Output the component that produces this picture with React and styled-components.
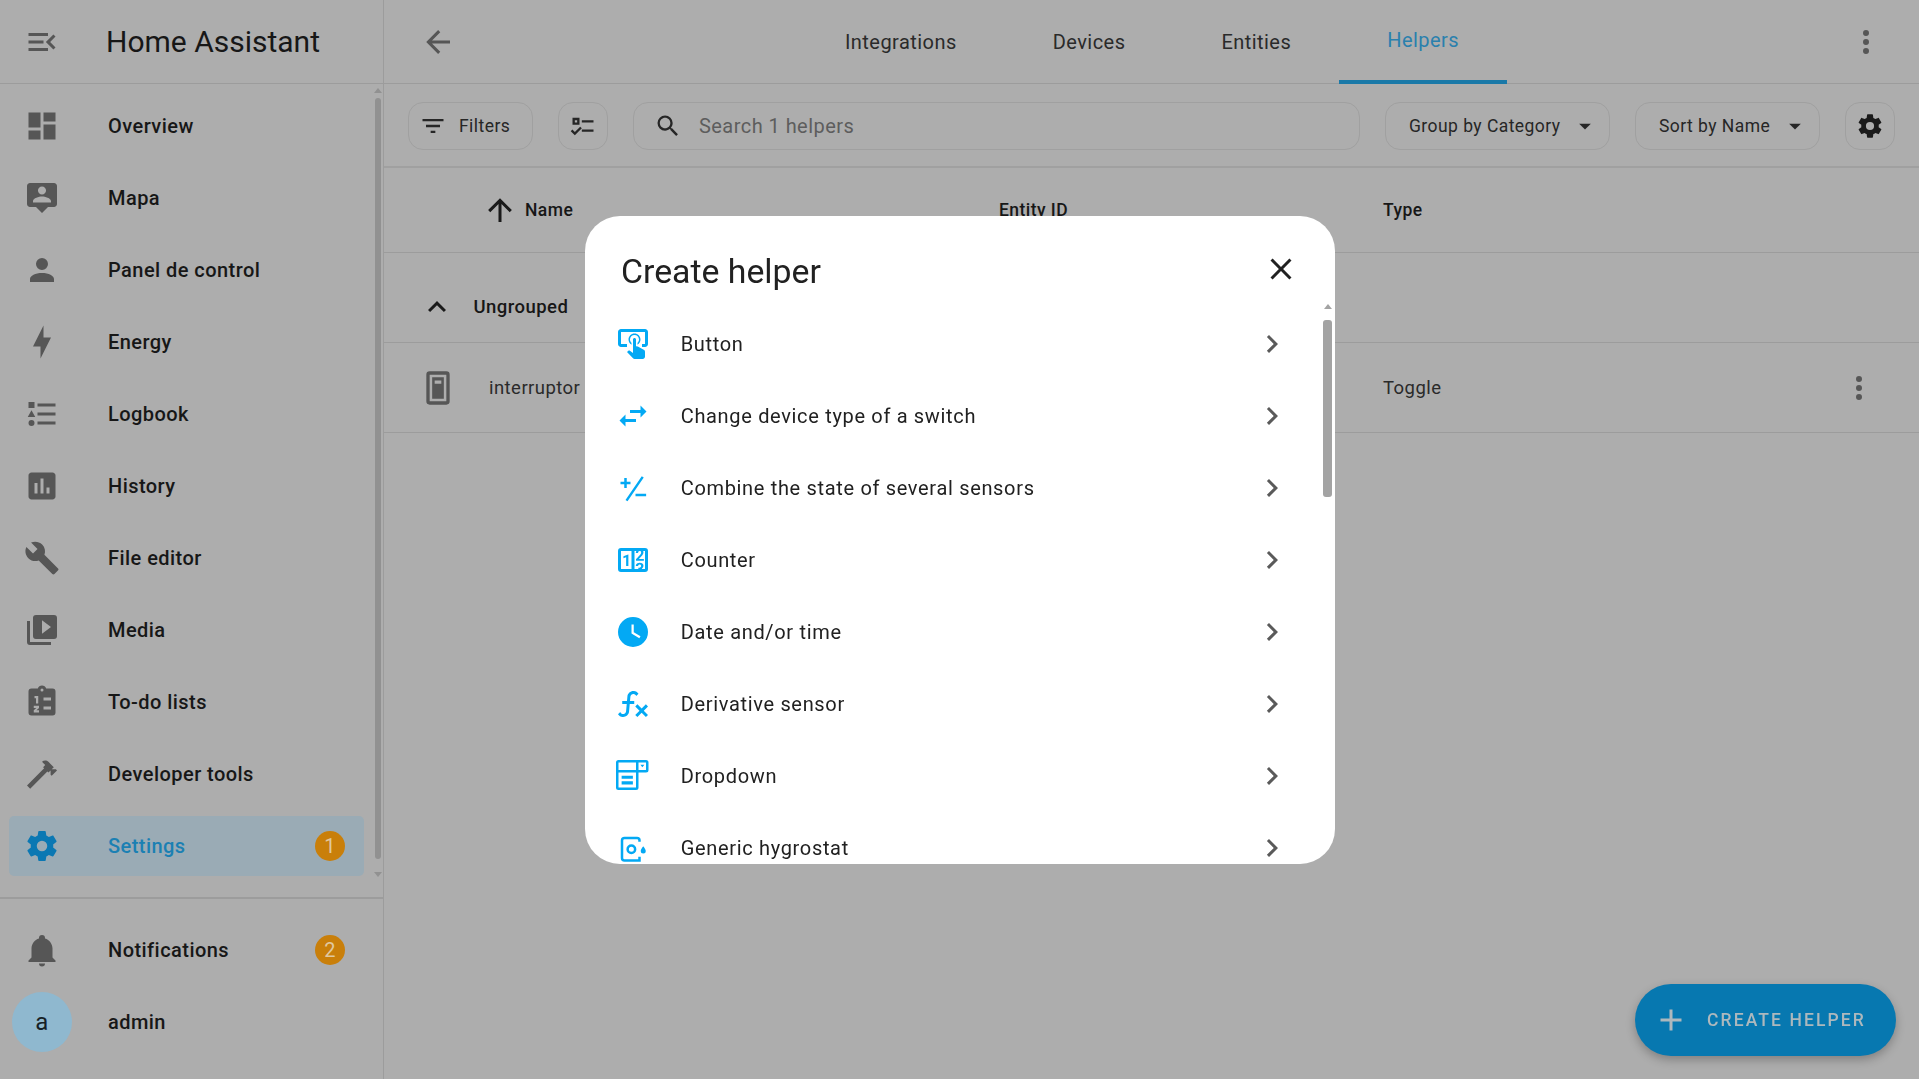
import React from 'react'
import styled, { createGlobalStyle } from 'styled-components'

const GlobalStyle = createGlobalStyle`
    html, body {
        margin: 0;
        height: 100%;
        overflow: hidden;
        background: #adadad;
        font-family: Roboto, "Liberation Sans", sans-serif;
    }
    * {
        box-sizing: border-box;
    }
`

const mdi = {
    menuOpen: 'M21,15.61L19.59,17L14.58,12L19.59,7L21,8.39L17.44,12L21,15.61M3,6H16V8H3V6M3,13V11H13V13H3M3,18V16H16V18H3Z',
    dashboard: 'M13,3V9H21V3M13,21H21V11H13M3,21H11V15H3M3,13H11V3H3V13Z',
    tooltipAccount: 'M20 2H4C2.9 2 2 2.9 2 4V16C2 17.1 2.9 18 4 18H8L12 22L16 18H20C21.1 18 22 17.1 22 16V4C22 2.9 21.1 2 20 2M12 4.3C13.5 4.3 14.7 5.5 14.7 7S13.5 9.7 12 9.7 9.3 8.5 9.3 7 10.5 4.3 12 4.3M18 15H6V14.1C6 12.1 10 11 12 11S18 12.1 18 14.1V15Z',
    account: 'M12,4A4,4 0 0,1 16,8A4,4 0 0,1 12,12A4,4 0 0,1 8,8A4,4 0 0,1 12,4M12,14C16.42,14 20,15.79 20,18V20H4V18C4,15.79 7.58,14 12,14Z',
    bolt: 'M11 15H6L13 1V9H18L11 23V15Z',
    listType: 'M5,9.5L7.5,14H2.5L5,9.5M3,4H7V8H3V4M5,20A2,2 0 0,0 7,18A2,2 0 0,0 5,16A2,2 0 0,0 3,18A2,2 0 0,0 5,20M9,5V7H21V5H9M9,19H21V17H9V19M9,13H21V11H9V13Z',
    chartBox: 'M19 3H5C3.9 3 3 3.9 3 5V19C3 20.1 3.9 21 5 21H19C20.1 21 21 20.1 21 19V5C21 3.9 20.1 3 19 3M9 17H7V10H9V17M13 17H11V7H13V17M17 17H15V13H17V17Z',
    wrench: 'M22.7,19L13.6,9.9C14.5,7.6 14,4.9 12.1,3C10.1,1 7.1,0.6 4.7,1.7L9,6L6,9L1.6,4.7C0.4,7.1 0.9,10.1 2.9,12.1C4.8,14 7.5,14.5 9.8,13.6L18.9,22.7C19.3,23.1 19.9,23.1 20.3,22.7L22.6,20.4C23.1,20 23.1,19.3 22.7,19Z',
    playBox: 'M4,6H2V20A2,2 0 0,0 4,22H18V20H4V6M20,2H8A2,2 0 0,0 6,4V16A2,2 0 0,0 8,18H20A2,2 0 0,0 22,16V4A2,2 0 0,0 20,2M12,14.5V5.5L18,10L12,14.5Z',
    clipboard: 'M19,3H14.82C14.4,1.84 13.3,1 12,1C10.7,1 9.6,1.84 9.18,3H5A2,2 0 0,0 3,5V19A2,2 0 0,0 5,21H19A2,2 0 0,0 21,19V5A2,2 0 0,0 19,3M12,3A1,1 0 0,1 13,4A1,1 0 0,1 12,5A1,1 0 0,1 11,4A1,1 0 0,1 12,3M13,9H18V11H13V9M13,15H18V17H13V15M7,8H9.5V13H8V9.5H7V8M6.5,14.5H10V16L8.3,17.5H10V19H6.5V17.5L8.2,16H6.5V14.5Z',
    hammer: 'M2 19.63L13.43 8.2L12.72 7.5L14.14 6.07L12 3.89C13.2 2.7 15.09 2.7 16.27 3.89L19.87 7.5L18.45 8.91H21.29L22 9.62L18.45 13.21L17.74 12.5V9.62L16.27 11.04L15.56 10.33L4.13 21.76L2 19.63Z',
    cog: 'M12,15.5A3.5,3.5 0 0,1 8.5,12A3.5,3.5 0 0,1 12,8.5A3.5,3.5 0 0,1 15.5,12A3.5,3.5 0 0,1 12,15.5M19.43,12.97C19.47,12.65 19.5,12.33 19.5,12C19.5,11.67 19.47,11.34 19.43,11L21.54,9.37C21.73,9.22 21.78,8.95 21.66,8.73L19.66,5.27C19.54,5.05 19.27,4.96 19.05,5.05L16.56,6.05C16.04,5.66 15.5,5.32 14.87,5.07L14.5,2.42C14.46,2.18 14.25,2 14,2H10C9.75,2 9.54,2.18 9.5,2.42L9.13,5.07C8.5,5.32 7.96,5.66 7.44,6.05L4.95,5.05C4.73,4.96 4.46,5.05 4.34,5.27L2.34,8.73C2.21,8.95 2.27,9.22 2.46,9.37L4.57,11C4.53,11.34 4.5,11.67 4.5,12C4.5,12.33 4.53,12.65 4.57,12.97L2.46,14.63C2.27,14.78 2.21,15.05 2.34,15.27L4.34,18.73C4.46,18.95 4.73,19.03 4.95,18.95L7.44,17.94C7.96,18.34 8.5,18.68 9.13,18.93L9.5,21.58C9.54,21.82 9.75,22 10,22H14C14.25,22 14.46,21.82 14.5,21.58L14.87,18.93C15.5,18.67 16.04,18.34 16.56,17.94L19.05,18.95C19.27,19.03 19.54,18.95 19.66,18.73L21.66,15.27C21.78,15.05 21.73,14.78 21.54,14.63L19.43,12.97Z',
    bell: 'M21,19V20H3V19L5,17V11C5,7.9 7.03,5.17 10,4.29C10,4.19 10,4.1 10,4A2,2 0 0,1 12,2A2,2 0 0,1 14,4C14,4.1 14,4.19 14,4.29C16.97,5.17 19,7.9 19,11V17L21,19M14,21A2,2 0 0,1 12,23A2,2 0 0,1 10,21',
    arrowLeft: 'M20,11V13H8L13.5,18.5L12.08,19.92L4.16,12L12.08,4.08L13.5,5.5L8,11H20Z',
    dots: 'M12,16A2,2 0 0,1 14,18A2,2 0 0,1 12,20A2,2 0 0,1 10,18A2,2 0 0,1 12,16M12,10A2,2 0 0,1 14,12A2,2 0 0,1 12,14A2,2 0 0,1 10,12A2,2 0 0,1 12,10M12,4A2,2 0 0,1 14,6A2,2 0 0,1 12,8A2,2 0 0,1 10,6A2,2 0 0,1 12,4Z',
    filter: 'M6,13H18V11H6M3,6V8H21V6M10,18H14V16H10V18Z',
    listChecks: 'M3,5H9V11H3V5M5,7V9H7V7H5M11,7H21V9H11V7M11,15H21V17H11V15M5,20L1.5,16.5L2.91,15.09L5,17.17L9.59,12.59L11,14L5,20Z',
    magnify: 'M9.5,3A6.5,6.5 0 0,1 16,9.5C16,11.11 15.41,12.59 14.44,13.73L14.71,14H15.5L20.5,19L19,20.5L14,15.5V14.71L13.73,14.44C12.59,15.41 11.11,16 9.5,16A6.5,6.5 0 0,1 3,9.5A6.5,6.5 0 0,1 9.5,3M9.5,5C7,5 5,7 5,9.5C5,12 7,14 9.5,14C12,14 14,12 14,9.5C14,7 12,5 9.5,5Z',
    menuDown: 'M7,10L12,15L17,10H7Z',
    arrowUp: 'M13,20H11V8L5.5,13.5L4.08,12.08L12,4.16L19.92,12.08L18.5,13.5L13,8V20Z',
    chevronUp: 'M7.41,15.41L12,10.83L16.59,15.41L18,14L12,8L6,14L7.41,15.41Z',
    chevronRight: 'M8.59,16.58L13.17,12L8.59,7.41L10,6L16,12L10,18L8.59,16.58Z',
    close: 'M19,6.41L17.59,5L12,10.59L6.41,5L5,6.41L10.59,12L5,17.59L6.41,19L12,13.41L17.59,19L19,17.59L13.41,12L19,6.41Z',
    plus: 'M19,13H13V19H11V13H5V11H11V5H13V11H19V13Z',
    lightSwitch: 'M7,2H17A2,2 0 0,1 19,4V20A2,2 0 0,1 17,22H7A2,2 0 0,1 5,20V4A2,2 0 0,1 7,2M7,4V20H17V4H7M8.5,5.5H15.5V18.5H8.5V5.5M10,7.5V9.5H14V7.5H10Z',
    tapButton: 'M13 5C15.21 5 17 6.79 17 9C17 10.5 16.2 11.77 15 12.46V11.24C15.61 10.69 16 9.89 16 9C16 7.34 14.66 6 13 6S10 7.34 10 9C10 9.89 10.39 10.69 11 11.24V12.46C9.8 11.77 9 10.5 9 9C9 6.79 10.79 5 13 5M20 20.5C19.97 21.32 19.32 21.97 18.5 22H13C12.62 22 12.26 21.85 12 21.57L8 17.37L8.74 16.6C8.93 16.39 9.2 16.28 9.5 16.28H9.7L12 18V9C12 8.45 12.45 8 13 8S14 8.45 14 9V13.47L15.21 13.6L19.15 15.79C19.68 16.03 20 16.56 20 17.14V20.5M20 2H4C2.9 2 2 2.9 2 4V12C2 13.11 2.9 14 4 14H8V12L4 12L4 4H20L20 12H18V14H20V13.96L20.04 14C21.13 14 22 13.09 22 12V4C22 2.9 21.11 2 20 2Z',
    swap: 'M21,9L17,5V8H10V10H17V13M7,11L3,15L7,19V16H14V14H7V11Z',
    plusMinus: 'M5,4H7V7H10V9H7V12H5V9H2V7H5V4M19,2.5L20.6,3.6L7.6,22.6L6,21.5L19,2.5M14,16.5H22.5V18.5H14V16.5Z',
    counter: 'M4,4H20A2,2 0 0,1 22,6V18A2,2 0 0,1 20,20H4A2,2 0 0,1 2,18V6A2,2 0 0,1 4,4M4,6V18H11V6H4M20,18V6H18.76C19,6.54 18.95,7.07 18.95,7.13C18.88,7.8 18.41,8.5 18.24,8.75L15.91,11.3L19.23,11.28L19.24,12.5L14.04,12.47L14,11.47C14,11.47 17.05,8.24 17.2,7.95C17.34,7.67 17.91,6 16.5,6C15.27,6.05 15.41,7.3 15.41,7.3L13.87,7.31C13.87,7.31 13.88,6.65 14.25,6H13V18H15.58L15.57,17.14L16.54,17.13C16.54,17.13 17.45,16.97 17.46,16.08C17.5,15.08 16.65,15.08 16.5,15.08C16.37,15.08 15.43,15.13 15.43,15.95H13.91C13.91,15.95 13.95,13.89 16.5,13.89C19.1,13.89 18.96,15.91 18.96,15.91C18.96,15.91 19,17.16 17.85,17.63L18.37,18H20M8.92,16H7.42V10.2L5.62,10.76V9.53L8.76,8.41H8.92V16Z',
    clock: 'M12,2A10,10 0 0,0 2,12A10,10 0 0,0 12,22A10,10 0 0,0 22,12A10,10 0 0,0 12,2M16.2,16.2L11,13V7H12.5V12.2L17,14.9L16.2,16.2Z',
    functionVariant: 'M12.42,5.29C11.32,5.19 10.35,6 10.25,7.11L10,10H12.82V12H9.82L9.38,17.07C9.18,19.27 7.24,20.9 5.04,20.7C3.79,20.59 2.66,19.9 2,18.83L3.5,17.33C3.83,18.38 4.95,18.97 6,18.63C6.78,18.39 7.33,17.7 7.4,16.89L7.82,12H4.82V10H8L8.27,6.93C8.46,4.73 10.39,3.1 12.6,3.28C13.86,3.39 15,4.09 15.66,5.17L14.16,6.67C13.91,5.9 13.23,5.36 12.42,5.29M22,13.65L20.59,12.24L17.76,15.07L14.93,12.24L13.5,13.65L16.35,16.5L13.5,19.31L14.93,20.72L17.76,17.89L20.59,20.72L22,19.31L19.17,16.5L22,13.65Z',
    dropdown: 'M2,0H24A2,2 0 0,1 26,2V8A2,2 0 0,1 24,10H18V22A2,2 0 0,1 16,24H2A2,2 0 0,1 0,22V2A2,2 0 0,1 2,0M2,2V8H16V2H2M18,2V8H24V2H18M19.5,3.8H22.7L21.1,5.8L19.5,3.8M2,10V22H16V10H2M4.5,12.5H13.5V15H4.5V12.5M4.5,17H13.5V19.5H4.5V17Z',
    hygrostat: 'M5.2,3H15.2A3,3 0 0,1 18.2,6V7H16.2V6A1,1 0 0,0 15.2,5H5.2A1,1 0 0,0 4.2,6V20A1,1 0 0,0 5.2,21H16.2V19H18.2V23H5.2A3,3 0 0,1 2.2,20V6A3,3 0 0,1 5.2,3M10.7,9A4,4 0 0,1 14.7,13A4,4 0 0,1 10.7,17A4,4 0 0,1 6.7,13A4,4 0 0,1 10.7,9M10.7,11A2,2 0 0,0 8.7,13A2,2 0 0,0 10.7,15A2,2 0 0,0 12.7,13A2,2 0 0,0 10.7,11M20.2,10.5C20.2,10.5 22.2,13 22.2,14.3A2,2 0 0,1 18.2,14.3C18.2,13 20.2,10.5 20.2,10.5Z',
}

const navItems = [
    { label: 'Overview', icon: mdi.dashboard },
    { label: 'Mapa', icon: mdi.tooltipAccount },
    { label: 'Panel de control', icon: mdi.account },
    { label: 'Energy', icon: mdi.bolt },
    { label: 'Logbook', icon: mdi.listType },
    { label: 'History', icon: mdi.chartBox },
    { label: 'File editor', icon: mdi.wrench },
    { label: 'Media', icon: mdi.playBox },
    { label: 'To-do lists', icon: mdi.clipboard },
    { label: 'Developer tools', icon: mdi.hammer },
    { label: 'Settings', icon: mdi.cog, active: true, badge: 1 },
]

const helpers = [
    { label: 'Button', icon: mdi.tapButton },
    { label: 'Change device type of a switch', icon: mdi.swap },
    { label: 'Combine the state of several sensors', icon: mdi.plusMinus, size: 30 },
    { label: 'Counter', icon: mdi.counter },
    { label: 'Date and/or time', icon: mdi.clock },
    { label: 'Derivative sensor', icon: mdi.functionVariant },
    { label: 'Dropdown', icon: mdi.dropdown, size: 32.5, box: 26 },
    { label: 'Generic hygrostat', icon: mdi.hygrostat, size: 30 },
]

const tabs = ['Integrations', 'Devices', 'Entities', 'Helpers']

const Page = styled.div`
    display: grid;
    grid-template-columns: 384px 1fr;
    height: 100vh;
    color: #171717;
    letter-spacing: 0.45px;
`

const Sidebar = styled.aside`
    display: flex;
    flex-direction: column;
    height: 100vh;
    border-right: 1px solid #9c9c9c;
`

const SideHeader = styled.div`
    display: flex;
    align-items: center;
    flex: 0 0 84px;
    padding-left: 24px;
    gap: 46px;
    border-bottom: 1px solid #9c9c9c;
`

const Title = styled.div`
    font-size: 30px;
    letter-spacing: 0;
    color: #171717;
`

const NavArea = styled.div`
    display: flex;
    height: 815px;
    border-bottom: 2px solid #9c9c9c;
`

const NavList = styled.nav`
    flex: 1;
    display: flex;
    flex-direction: column;
    gap: 12px;
    padding: 12px 0 0 9px;
`

const NavItem = styled.div`
    display: flex;
    align-items: center;
    flex: 0 0 60px;
    width: 355px;
    padding-left: 15px;
    gap: 48px;
    border-radius: 5px;
    font-size: 20px;
    font-weight: 500;
    color: ${({ $active }) => ($active ? '#1b80b3' : '#171717')};
    background: ${({ $active }) => ($active ? '#9aabb5' : 'transparent')};
`

const NavLabel = styled.span`
    flex: 1;
`

const Badge = styled.span`
    display: flex;
    align-items: center;
    justify-content: center;
    width: 30px;
    height: 30px;
    margin-right: 19px;
    border-radius: 50%;
    background: #c97f0a;
    color: #e0c8a0;
    font-size: 20px;
    font-weight: 400;
`

const ScrollBar = styled.div`
    display: flex;
    flex-direction: column;
    align-items: center;
    flex: 0 0 auto;
    width: ${({ $w }) => $w}px;
    margin: ${({ $mt }) => $mt}px ${({ $mr }) => $mr}px 0 0;
    gap: ${({ $gap }) => $gap}px;
`

const ScrollArrow = styled.span`
    width: 0;
    height: 0;
    border-left: 4px solid transparent;
    border-right: 4px solid transparent;
    border-${({ $down }) => ($down ? 'top' : 'bottom')}: 5px solid ${({ $color }) => $color};
`

const ScrollThumb = styled.span`
    width: 100%;
    height: ${({ $h }) => $h}px;
    margin-bottom: ${({ $after }) => $after || 0}px;
    border-radius: 3px;
    background: ${({ $color }) => $color};
`

const SideBottom = styled.div`
    display: flex;
    flex-direction: column;
    gap: 12px;
    padding: 21px 0 0 9px;
`

const Avatar = styled.span`
    display: flex;
    align-items: center;
    justify-content: center;
    width: 60px;
    height: 60px;
    margin-left: 3px;
    border-radius: 50%;
    background: #8fb8cf;
    color: #171f26;
    font-size: 24px;
    font-weight: 400;
`

const UserRow = styled.div`
    display: flex;
    align-items: center;
    height: 60px;
    gap: 36px;
    font-size: 20px;
    font-weight: 500;
`

const Main = styled.main`
    display: flex;
    flex-direction: column;
    min-width: 0;
`

const TopBar = styled.header`
    display: flex;
    align-items: stretch;
    justify-content: space-between;
    flex: 0 0 84px;
    padding: 0 23px 0 24px;
    border-bottom: 1px solid #9c9c9c;
`

const IconCell = styled.div`
    display: flex;
    align-items: center;
    justify-content: center;
    width: 60px;
`

const Tabs = styled.div`
    display: flex;
`

const Tab = styled.div`
    display: flex;
    align-items: center;
    padding: 0 48px;
    font-size: 20px;
    color: ${({ $active }) => ($active ? '#2a80ad' : '#2a2a2a')};
    border-bottom: ${({ $active }) => ($active ? '4px solid #1a79a8' : 'none')};
    margin-bottom: -1px;
`

const Toolbar = styled.div`
    display: flex;
    align-items: center;
    flex: 0 0 84px;
    padding: 1px 24px 0;
    gap: 25px;
    border-bottom: 2px solid #a0a0a0;
`

const Pill = styled.div`
    display: flex;
    align-items: center;
    justify-content: ${({ $center }) => ($center ? 'center' : 'flex-start')};
    flex: ${({ $grow }) => ($grow ? '1' : '0 0 auto')};
    width: ${({ $w }) => ($w ? `${$w}px` : 'auto')};
    height: 48px;
    padding: ${({ $pad }) => $pad || '0'};
    gap: ${({ $gap }) => $gap || 0}px;
    border: 1px solid #a0a0a0;
    border-radius: 15px;
    font-size: 17.5px;
    color: #262626;
`

const SearchText = styled.span`
    font-size: 20px;
    color: #5d5d5d;
`

const PillLabel = styled.span`
    flex: 1;
`

const TableHead = styled.div`
    display: grid;
    grid-template-columns: 615px 384px 1fr;
    align-items: center;
    flex: 0 0 85px;
    border-bottom: 1px solid #9c9c9c;
    font-size: 17.5px;
    font-weight: 500;
`

const NameHead = styled.div`
    display: flex;
    align-items: center;
    gap: 7px;
    padding-left: 98px;
`

const GroupRow = styled.div`
    display: flex;
    align-items: center;
    flex: 0 0 90px;
    padding: 18px 0 0 35px;
    gap: 18.5px;
    border-bottom: 1px solid #9c9c9c;
    font-size: 18.5px;
    font-weight: 500;
`

const DataRow = styled.div`
    display: grid;
    grid-template-columns: 71.5px 510px 384px 1fr 78px;
    align-items: center;
    flex: 0 0 90px;
    padding-left: 33.5px;
    border-bottom: 1px solid #9c9c9c;
    font-size: 18.5px;
    color: #2a2a2a;
`

const Fab = styled.div`
    position: fixed;
    right: 23px;
    bottom: 23px;
    display: flex;
    align-items: center;
    width: 261px;
    height: 72px;
    padding-left: 18px;
    gap: 18px;
    border-radius: 36px;
    background: #0778b0;
    box-shadow: 0 4px 10px rgba(0, 0, 0, 0.25);
    color: #adb8bd;
    font-size: 17.5px;
    font-weight: 500;
    letter-spacing: 2.1px;
`

const Overlay = styled.div`
    position: fixed;
    top: 216px;
    left: 585px;
`

const Dialog = styled.section`
    display: flex;
    flex-direction: column;
    width: 750px;
    height: 648px;
    border-radius: 35px;
    background: #fff;
    overflow: hidden;
`

const DialogHead = styled.div`
    display: flex;
    align-items: center;
    justify-content: space-between;
    flex: 0 0 92px;
    padding: 18px 36px 0 36px;
`

const DialogTitle = styled.h2`
    margin: 0;
    font-size: 33.8px;
    font-weight: 400;
    color: #212121;
`

const CloseIcon = styled.div`
    margin-top: -4px;
`

const DialogBody = styled.div`
    display: flex;
    flex: 1;
    min-height: 0;
`

const HelperList = styled.div`
    flex: 1;
    overflow: hidden;
`

const HelperRow = styled.div`
    display: flex;
    align-items: center;
    height: 72px;
    padding: 0 33.5px 0 29.7px;
    font-size: 20px;
    letter-spacing: 0.67px;
    color: #212121;
`

const HelperIcon = styled.div`
    display: flex;
    align-items: center;
    justify-content: center;
    flex: 0 0 36px;
`

const HelperLabel = styled.span`
    flex: 1;
    margin-left: 30px;
`

const Icon = styled.svg`
    flex: none;
    display: block;
    overflow: visible;
    width: ${({ $size }) => $size || 36}px;
    height: ${({ $size }) => $size || 36}px;
    fill: ${({ $color }) => $color || '#565656'};
    fill-rule: evenodd;
`

const Mdi = ({ path, size, color, box = 24 }) => (
    <Icon viewBox={`0 0 ${box} ${box}`} $size={size} $color={color}>
        <path d={path} />
    </Icon>
)

const App = () => {
    return (
        <>
            <GlobalStyle />
            <Page>
                <Sidebar>
                    <SideHeader>
                        <Mdi path={mdi.menuOpen} />
                        <Title>Home Assistant</Title>
                    </SideHeader>
                    <NavArea>
                        <NavList>
                            {navItems.map((item) => (
                                <NavItem key={item.label} $active={item.active}>
                                    <Mdi path={item.icon} color={item.active ? '#0b78b3' : undefined} />
                                    <NavLabel>{item.label}</NavLabel>
                                    {item.badge && <Badge>{item.badge}</Badge>}
                                </NavItem>
                            ))}
                        </NavList>
                        <ScrollBar $w={6} $mr={2} $mt={4} $gap={5}>
                            <ScrollArrow $color="#919191" />
                            <ScrollThumb $h={761} $after={8} $color="#919191" />
                            <ScrollArrow $down $color="#919191" />
                        </ScrollBar>
                    </NavArea>
                    <SideBottom>
                        <NavItem>
                            <Mdi path={mdi.bell} />
                            <NavLabel>Notifications</NavLabel>
                            <Badge>2</Badge>
                        </NavItem>
                        <UserRow>
                            <Avatar>a</Avatar>
                            admin
                        </UserRow>
                    </SideBottom>
                </Sidebar>
                <Main>
                    <TopBar>
                        <IconCell>
                            <Mdi path={mdi.arrowLeft} />
                        </IconCell>
                        <Tabs>
                            {tabs.map((tab) => (
                                <Tab key={tab} $active={tab === 'Helpers'}>{tab}</Tab>
                            ))}
                        </Tabs>
                        <IconCell>
                            <Mdi path={mdi.dots} />
                        </IconCell>
                    </TopBar>
                    <Toolbar>
                        <Pill $w={125} $pad="0 0 0 10px" $gap={12}>
                            <Mdi path={mdi.filter} size={28} color="#262626" />
                            Filters
                        </Pill>
                        <Pill $w={50} $center>
                            <Mdi path={mdi.listChecks} size={28} color="#262626" />
                        </Pill>
                        <Pill $grow $pad="0 0 0 19.6px" $gap={17.4}>
                            <Mdi path={mdi.magnify} size={28} color="#262626" />
                            <SearchText>Search 1 helpers</SearchText>
                        </Pill>
                        <Pill $w={225} $pad="0 10px 0 23px">
                            <PillLabel>Group by Category</PillLabel>
                            <Mdi path={mdi.menuDown} size={28} color="#262626" />
                        </Pill>
                        <Pill $w={185} $pad="0 10px 0 23px">
                            <PillLabel>Sort by Name</PillLabel>
                            <Mdi path={mdi.menuDown} size={28} color="#262626" />
                        </Pill>
                        <Pill $w={50} $center>
                            <Mdi path={mdi.cog} size={28} color="#1a1a1a" />
                        </Pill>
                    </Toolbar>
                    <TableHead>
                        <NameHead>
                            <Mdi path={mdi.arrowUp} color="#1a1a1a" />
                            Name
                        </NameHead>
                        <div>Entity ID</div>
                        <div>Type</div>
                    </TableHead>
                    <GroupRow>
                        <Mdi path={mdi.chevronUp} color="#1a1a1a" />
                        Ungrouped
                    </GroupRow>
                    <DataRow>
                        <Mdi path={mdi.lightSwitch} size={40} />
                        <div>interruptor virtual</div>
                        <div />
                        <div>Toggle</div>
                        <Mdi path={mdi.dots} />
                    </DataRow>
                </Main>
            </Page>
            <Fab>
                <Mdi path={mdi.plus} color="#adb8bd" />
                CREATE HELPER
            </Fab>
            <Overlay>
                <Dialog>
                    <DialogHead>
                        <DialogTitle>Create helper</DialogTitle>
                        <CloseIcon>
                            <Mdi path={mdi.close} color="#212121" />
                        </CloseIcon>
                    </DialogHead>
                    <DialogBody>
                        <HelperList>
                            {helpers.map((helper) => (
                                <HelperRow key={helper.label}>
                                    <HelperIcon>
                                        <Mdi path={helper.icon} color="#03a9f4" size={helper.size} box={helper.box} />
                                    </HelperIcon>
                                    <HelperLabel>{helper.label}</HelperLabel>
                                    <Mdi path={mdi.chevronRight} color="#5a5a5a" />
                                </HelperRow>
                            ))}
                        </HelperList>
                        <ScrollBar $w={9} $mr={3} $mt={-4} $gap={11}>
                            <ScrollArrow $color="#a3a3a3" />
                            <ScrollThumb $h={177} $after={300} $color="#a3a3a3" />
                        </ScrollBar>
                    </DialogBody>
                </Dialog>
            </Overlay>
        </>
    )
}

export default App
